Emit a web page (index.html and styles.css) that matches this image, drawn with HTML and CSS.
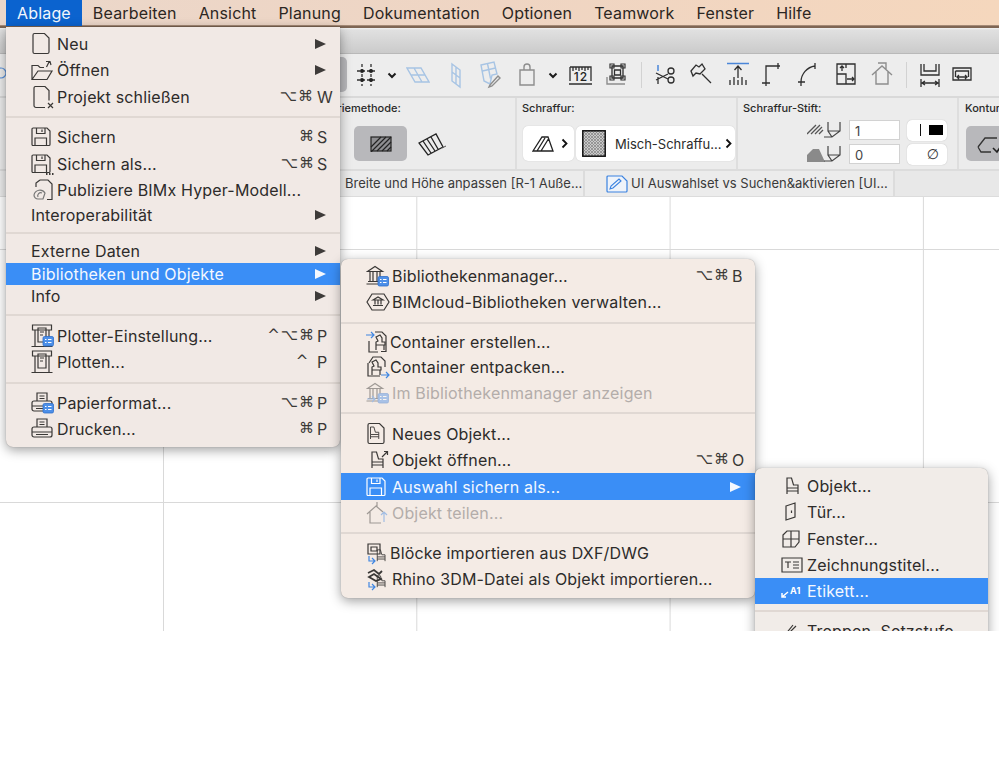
FILE: index.html
```html
<!DOCTYPE html>
<html lang="de">
<head>
<meta charset="utf-8">
<title>Ablage-Menü</title>
<link rel="stylesheet" href="styles.css">
</head>
<body>
<svg class="defs" width="0" height="0" aria-hidden="true">
  <defs>
    <pattern id="dots" width="3" height="3" patternUnits="userSpaceOnUse"><rect width="3" height="3" fill="#c9c9c9"/><circle cx="1" cy="1" r=".8" fill="#555"/><circle cx="2.500" cy="2.500" r=".5" fill="#777"/></pattern>
  </defs>
  <symbol id="floppy" viewBox="0 0 24 24"><path d="M1.500 3h14.500l3 3v13.500a1 1 0 0 1-1 1h-16a1 1 0 0 1-1-1v-15.500a1 1 0 0 1 1-1zM5.500 3v5.500h8.500v-5.500M11 4.500v2.500M4 20.500v-7.500h11.500v7.500"/></symbol>
  <symbol id="chair" viewBox="0 0 24 24"><path d="M6 4h4.500l2 7h4.500v3h-11zM6 14v6M17 14v6M6 17h11"/></symbol>
  <symbol id="temple" viewBox="0 0 24 24"><path d="M1.500 7.500l7.500-5 7.500 5zM4 8v9M7 8v9M11 8v9M14 8v9M2 17.500h14M.5 20h14"/></symbol>
  <symbol id="badge" viewBox="0 0 24 24"><rect x="12" y="12.500" width="10.500" height="9.500" rx="1.500" fill="#4d8fe8" stroke="#2f6fca" stroke-width=".8"/><path d="M14 15.500h1.500M17 15.500h3.500M14 18.500h1.500M17 18.500h3.500" stroke="#fff" stroke-width="1.200"/></symbol>
  <symbol id="printer" viewBox="0 0 24 24"><path d="M6 10v-8h10v8M8.500 5h5M8.500 7.500h5M3 10h16a2 2 0 0 1 2 2v6a2 2 0 0 1-2 2h-16a2 2 0 0 1-2-2v-6a2 2 0 0 1 2-2zM1 15h20M5 17.500h12"/></symbol>
  <symbol id="plotter" viewBox="0 0 24 24"><path d="M1.500 1h19v5h-19zM4 6v16M18 6v16M.5 22.500h21M7 4h8v14h-8zM9 8h4M9 11h3"/></symbol>
  <symbol id="page" viewBox="0 0 24 24"><path d="M3.500 1.500h10l4.500 4.500v14a1.500 1.500 0 0 1-1.500 1.500h-13a1.500 1.500 0 0 1-1.500-1.500v-17a1.500 1.500 0 0 1 1.500-1.500z"/></symbol>
</svg>

<div class="app">
  <nav class="menubar">
    <span class="mb-item on">Ablage</span>
    <span class="mb-item">Bearbeiten</span>
    <span class="mb-item">Ansicht</span>
    <span class="mb-item">Planung</span>
    <span class="mb-item">Dokumentation</span>
    <span class="mb-item">Optionen</span>
    <span class="mb-item">Teamwork</span>
    <span class="mb-item">Fenster</span>
    <span class="mb-item">Hilfe</span>
  </nav>
  <div class="titlebar"></div>

  <div class="toolbar">
    <svg class="edge-circle" width="8" height="24" viewBox="0 0 8 24"><circle cx="1" cy="12" r="5" fill="none" stroke="#5b93dc" stroke-width="1.200"/></svg>
    <div class="tb-active"></div>
    <div class="tb-icons">
      <svg class="ti" width="24" height="36" viewBox="0 0 24 36"><path class="s dash" d="M9 7v22M18 7v22M4 14h19M4 23h19"/><circle class="k" cx="9" cy="14" r="2"/><circle class="k" cx="18" cy="14" r="2"/><circle class="k" cx="9" cy="23" r="2"/><circle class="k" cx="18" cy="23" r="2"/></svg>
      <svg class="ti d27" width="24" height="36" viewBox="0 0 24 36"><path class="chev" d="M8.500 16.500l3.500 3.500 3.500-3.500"/></svg>
      <svg class="ti d26" width="24" height="36" viewBox="0 0 24 36"><path class="b" d="M1 11h14l8 14h-14zM8 11l8 14M5 18h14"/></svg>
      <svg class="ti d38" width="24" height="36" viewBox="0 0 24 36"><path class="b" d="M8 7l8 6v17l-8-6zM12 10v17M8 15l8 6"/></svg>
      <svg class="ti d34" width="24" height="36" viewBox="0 0 24 36"><path class="b" d="M3 8l13-3 3 12-5 1-2 9-6-3zM9.500 6.500l3 15M4.500 14l13-3"/><path class="g" d="M12 28l8-9 2 2-8 8-3 1z"/></svg>
      <svg class="ti d37" width="24" height="36" viewBox="0 0 24 36"><path class="g" d="M9 13v-3a3 3 0 0 1 6 0v3M5 13h14v15h-14z"/></svg>
      <svg class="ti d26" width="24" height="36" viewBox="0 0 24 36"><path class="chev" d="M8.500 16.500l3.500 3.500 3.500-3.500"/></svg>
      <svg class="ti d28" width="24" height="36" viewBox="0 0 24 36"><path class="s" d="M1 10h21v14M1 10v14M4 10v4M7 10v3M10 10v4M13 10v3M16 10v4M19 10v3M0 27h23" /><text class="rule-t" x="12" y="24" text-anchor="middle">12</text></svg>
      <svg class="ti d36" width="24" height="36" viewBox="0 0 24 36"><path class="s" d="M7 9h11v12h-11zM9.500 13h6v5h-6z"/><path class="g" d="M2 20v7h6M8 27h12"/><path class="k2" d="M5 7h4v4h-4zM16 7h4v4h-4zM5 19h4v4h-4zM16 19h4v4h-4z"/></svg>
      <div class="tb-div d24"></div>
      <svg class="ti d24" width="24" height="36" viewBox="0 0 24 36"><path class="bl" d="M5 8v6"/><path class="s" d="M5 20v7M3 16l12 6M3 23l12-6"/><circle class="s" cx="18" cy="14" r="3"/><circle class="s" cx="18" cy="23" r="3"/></svg>
      <svg class="ti d36" width="24" height="36" viewBox="0 0 24 36"><path class="s" d="M2 14l5-6 3 2 3-3 3 5-5 5-4-1-3 3zM13 17l9 9"/></svg>
      <svg class="ti d37" width="24" height="36" viewBox="0 0 24 36"><path class="bl" d="M1 6.500h22"/><path class="s" d="M12 21v-12M8.500 13l3.500-4 3.500 4M4 28v-5M8 28v-8M12 28v-5M16 28v-8M20 28v-5"/></svg>
      <svg class="ti d33" width="24" height="36" viewBox="0 0 24 36"><path class="s" d="M7 29v-20h14M3 26h8M19 6v6"/></svg>
      <svg class="ti d37" width="24" height="36" viewBox="0 0 24 36"><path class="s" d="M5 29v-4c0-8 6-15 14-16M2 25h7M19 6v6"/></svg>
      <svg class="ti d37" width="24" height="36" viewBox="0 0 24 36"><path class="s" d="M4 7h18v20h-18zM4 17h9v10M13 7v4"/><path class="s" d="M9 14v-5M7 11l2-2 2 2M14 22h7M19 20l2 2-2 2"/></svg>
      <svg class="ti d37" width="24" height="36" viewBox="0 0 24 36"><path class="g" d="M2 18l10-9 10 9M6 15v12h12v-12M8 6h8v6"/></svg>
      <div class="tb-div d24"></div>
      <svg class="ti d24" width="24" height="36" viewBox="0 0 24 36"><path class="s" d="M3 7v11h18v-11M6 7v7h12v-7M3 22v8M21 22v8M4 26h16M7 24l-3 2 3 2M17 24l3 2-3 2"/></svg>
      <svg class="ti d32" width="24" height="36" viewBox="0 0 24 36"><path class="s" d="M3 11h18v12h-18zM5.500 14h13v6M5.500 14v6M7 20h10M9 18l-2 2 2 2M15 18l2 2-2 2"/></svg>
      <div class="tb-div d24 last"></div>
    </div>
  </div>

  <div class="infobox">
    <section class="sec sec-geo">
      <h4 class="lbl">Geometriemethode:</h4>
      <div class="geo-btns">
        <div class="geo-on">
          <svg width="22" height="16" viewBox="0 0 22 16"><rect x="1" y="1" width="20" height="14" fill="#8f8f92" stroke="#222" stroke-width="1.200"/><path d="M1 11l10-10M1 16l15-15M7 15l14-14M12 15l9-9M17 15l4-4" stroke="#222" stroke-width="1.200"/></svg>
        </div>
        <svg class="geo-off" width="30" height="24" viewBox="0 0 30 24"><path d="M2 11l17-9 7 13-15 8zM6 9l8 12M10 7l8 12M14 5l7 12" fill="none" stroke="#222" stroke-width="1.300"/><path d="M25 16l4-2" stroke="#555"/></svg>
      </div>
    </section>
    <section class="sec sec-hatch">
      <h4 class="lbl">Schraffur:</h4>
      <div class="hatch-btns">
        <div class="wbtn w1">
          <svg width="22" height="16" viewBox="0 0 22 16"><path d="M1 15l9-14h6l5 14zM5 15l8-13M9 15l8-13M1.500 15h19" fill="none" stroke="#222" stroke-width="1.300"/></svg>
          <svg class="chv" width="7" height="11" viewBox="0 0 7 11"><path d="M1.500 1.500l4 4-4 4" fill="none" stroke="#111" stroke-width="1.800"/></svg>
        </div>
        <div class="wbtn w2">
          <svg class="swatch" width="24" height="27" viewBox="0 0 24 27"><rect x=".8" y=".8" width="22.400" height="25.400" fill="url(#dots)" stroke="#111" stroke-width="1.500"/></svg>
          <span class="w2-t">Misch-Schraffu...</span>
          <svg class="chv" width="7" height="11" viewBox="0 0 7 11"><path d="M1.500 1.500l4 4-4 4" fill="none" stroke="#111" stroke-width="1.800"/></svg>
        </div>
      </div>
    </section>
    <section class="sec sec-pen">
      <h4 class="lbl">Schraffur-Stift:</h4>
      <div class="pen-row">
        <svg width="34" height="22" viewBox="0 0 34 22"><path d="M0 15l9-9M4 15l9-9M8 15l7-7M12 15l4-4" stroke="#555" stroke-width="1.300" fill="none"/><path d="M21 3v9l4 6M33 3v9l-8 6h-8M21 12h12" fill="none" stroke="#444" stroke-width="1.200"/></svg>
        <span class="field">1</span>
        <span class="pill"><i class="bar"></i><i class="blk"></i></span>
      </div>
      <div class="pen-row">
        <svg width="34" height="22" viewBox="0 0 34 22"><path d="M0 19v-7l6-6h6l6 13z" fill="#8a8a8a"/><path d="M21 3v9l4 6M33 3v9l-8 6h-8M21 12h12" fill="none" stroke="#444" stroke-width="1.200"/></svg>
        <span class="field">0</span>
        <span class="pill slash">∅</span>
      </div>
    </section>
    <section class="sec sec-cont">
      <h4 class="lbl">Kontur:</h4>
      <div class="cont-btn">
        <svg width="28" height="22" viewBox="0 0 28 22"><path d="M2 14l7-9h12M2 14l3 5h10" fill="none" stroke="#333" stroke-width="1.300"/><path d="M17 15l4 4 6-9" fill="none" stroke="#222" stroke-width="1.600"/></svg>
      </div>
    </section>
  </div>

  <div class="tabs">
    <div class="tab t1">Breite und Höhe anpassen [R-1 Auße...</div>
    <div class="tab t2">
      <svg width="22" height="18" viewBox="0 0 22 18"><path d="M2 1h14l5 5v10a1 1 0 0 1-1 1h-18a1 1 0 0 1-1-1v-14a1 1 0 0 1 1-1z" fill="#eef3fa" stroke="#3a82e0" stroke-width="1.200"/><path d="M4 14l1-3 8-7 2 2-8 7z" fill="none" stroke="#3a82e0" stroke-width="1.100"/></svg>
      <span>UI Auswahlset vs Suchen&amp;aktivieren [UI...</span>
    </div>
  </div>

  <main class="canvas"></main>

  <!-- Menu: Ablage -->
  <div class="menu m1">
    <div class="row"><svg class="ic"><use href="#page"/></svg><span>Neu</span><i class="arr"></i></div>
    <div class="row"><svg class="ic" viewBox="0 0 24 24"><path d="M1 21.500v-14h6l2 2h4M1 21.500h15l5-8.500h-14l-6 8.500zM15.500 9l3-6M15 3.500h4l1 3.500"/></svg><span>Öffnen</span><i class="arr"></i></div>
    <div class="row"><svg class="ic" viewBox="0 0 24 24"><path d="M4 1.500h10l4 4v10M14 22.500h-9a2 2 0 0 1-2-2v-17a2 2 0 0 1 1-2M17 18l5 5M22 18l-5 5"/></svg><span>Projekt schließen</span><span class="keys">⌥⌘<b class="wide">W</b></span></div>
    <div class="sep"></div>
    <div class="row"><svg class="ic"><use href="#floppy"/></svg><span>Sichern</span><span class="keys">⌘<b>S</b></span></div>
    <div class="row"><svg class="ic"><use href="#floppy"/><path d="M15 22h1.500M18 22h1.500M21 22h1.500" stroke-width="1.800"/></svg><span>Sichern als...</span><span class="keys">⌥⌘<b>S</b></span></div>
    <div class="row"><svg class="ic" viewBox="0 0 24 24"><path d="M9 2h8l4 4v15.500h-5M5 9V5l4-3"/><path d="M3 17a6 6 0 0 1 11-2l-2 6H7a4 4 0 0 1-4-4zM7 19a3 3 0 0 1 4-4" stroke="#777"/></svg><span>Publiziere BIMx Hyper-Modell...</span></div>
    <div class="row t"><span>Interoperabilität</span><i class="arr"></i></div>
    <div class="sep"></div>
    <div class="row t"><span>Externe Daten</span><i class="arr"></i></div>
    <div class="row t hl"><span>Bibliotheken und Objekte</span><i class="arr"></i></div>
    <div class="row t"><span>Info</span><i class="arr"></i></div>
    <div class="sep wide-sep"></div>
    <div class="row"><svg class="ic"><use href="#plotter"/><use href="#badge"/></svg><span>Plotter-Einstellung...</span><span class="keys">^⌥⌘<b>P</b></span></div>
    <div class="row"><svg class="ic"><use href="#plotter"/></svg><span>Plotten...</span><span class="keys">^ <b>P</b></span></div>
    <div class="sep"></div>
    <div class="row"><svg class="ic"><use href="#printer"/><use href="#badge"/></svg><span>Papierformat...</span><span class="keys">⌥⌘<b>P</b></span></div>
    <div class="row"><svg class="ic"><use href="#printer"/></svg><span>Drucken...</span><span class="keys">⌘<b>P</b></span></div>
  </div>

  <!-- Menu: Bibliotheken und Objekte -->
  <div class="menu m2">
    <div class="row"><svg class="ic"><use href="#temple"/><use href="#badge"/></svg><span>Bibliothekenmanager...</span><span class="keys">⌥⌘<b>B</b></span></div>
    <div class="row"><svg class="ic" viewBox="0 0 24 24"><path d="M1 12l5-8h12l5 8-5 8h-12z"/><path d="M7 10l5-3 5 3zM9 10.500v4M12 10.500v4M15 10.500v4M7 15.500h10"/></svg><span>BIMcloud-Bibliotheken verwalten...</span></div>
    <div class="sep"></div>
    <div class="row c tight"><svg class="ic" viewBox="0 0 24 24"><path class="blue" d="M0 5h8M5 2l3 3-3 3"/><path d="M9 2h7l4 4v15.500h-5M3 11v11h9"/><path d="M10 7l4-2 2 3v4h3v3h-9v-3l2-1zM10 15v5M18 15v5"/></svg><span>Container erstellen...</span></div>
    <div class="row c tight"><svg class="ic" viewBox="0 0 24 24"><path d="M3 8l4-6h8l4 4v6M2 8v13h12"/><path d="M6 7l4-2 2 3v4h3v3h-9v-3l2-1zM6 15v5M14 15v5"/><path class="blue" d="M15 20h8M20 17l3 3-3 3"/></svg><span>Container entpacken...</span></div>
    <div class="row c dim"><svg class="ic"><use href="#temple"/><use href="#badge"/><path class="blue" d="M1 18h8M6 15l3 3-3 3"/></svg><span>Im Bibliothekenmanager anzeigen</span></div>
    <div class="sep wide-sep"></div>
    <div class="row"><svg class="ic"><use href="#page"/><use href="#chair" x="0" y="2" width="18" height="18"/></svg><span>Neues Objekt...</span></div>
    <div class="row"><svg class="ic"><use href="#chair"/><path d="M16 9l5-5M18 3.500h3.500v3.500"/></svg><span>Objekt öffnen...</span><span class="keys">⌥⌘<b>O</b></span></div>
    <div class="row hl"><svg class="ic"><use href="#floppy"/></svg><span>Auswahl sichern als...</span><i class="arr"></i></div>
    <div class="row dim"><svg class="ic" viewBox="0 0 24 24"><path d="M1 13l9-8 7 6M4 11v11h11M11 1v5"/><path class="blue" d="M18 21v-10M15 14l3-3 3 3"/></svg><span>Objekt teilen...</span></div>
    <div class="sep thin-sep"></div>
    <div class="row tight"><svg class="ic" viewBox="0 0 24 24"><path d="M2 3h12v10H2zM5 6h6v4H5z"/><use href="#chair" x="7" y="6" width="17" height="17"/><path class="blue" d="M3 15v5h6M6 17l3 3-3 3"/></svg><span>Blöcke importieren aus DXF/DWG</span></div>
    <div class="row"><svg class="ic" viewBox="0 0 24 24"><path d="M2 6l6-3 5 4 3-3M3 10l5-3 7 5-5 2z" stroke-width="1.800"/><use href="#chair" x="7" y="6" width="17" height="17"/><path class="blue" d="M3 15v5h6M6 17l3 3-3 3"/></svg><span>Rhino 3DM-Datei als Objekt importieren...</span></div>
  </div>

  <!-- Menu: Auswahl sichern als -->
  <div class="menu m3">
    <div class="row"><svg class="ic"><use href="#chair"/></svg><span>Objekt...</span></div>
    <div class="row"><svg class="ic" viewBox="0 0 24 24"><path d="M5 6l9-3v14l-9 3zM10.500 10.500v2.500"/></svg><span>Tür...</span></div>
    <div class="row"><svg class="ic" viewBox="0 0 24 24"><path d="M2 8l4-4h12v11l-4 5H2zM2 12h16M10 4v16"/></svg><span>Fenster...</span></div>
    <div class="row"><svg class="ic" viewBox="0 0 24 24"><path d="M1 5h20v14H1zM4 9h6M7 9v6M12 9h6M12 12h6M12 15h6"/></svg><span>Zeichnungstitel...</span></div>
    <div class="row hl"><svg class="ic" viewBox="0 0 24 24"><path d="M1 18l6-5M1 14v4h4" stroke-width="1.500"/><text class="a1" x="9" y="15">A1</text></svg><span>Etikett...</span></div>
    <div class="sep"></div>
    <div class="row"><svg class="ic" viewBox="0 0 24 24"><path d="M4 16l8-10M2 20l4-4 9-9M9 20l6-6M17 19h2"/></svg><span>Treppen, Setzstufe</span></div>
  </div>
</div>
</body>
</html>
```

FILE: styles.css
```css
* { box-sizing: border-box; }
html, body { margin: 0; padding: 0; background: #fff; }
body { font-family: Inter, "Noto Sans", "Liberation Sans", sans-serif; color: #2b2b2b; }
.defs { position: absolute; }

.app {
  position: relative;
  width: 999px;
  height: 631px;
  overflow: hidden;
  display: flex;
  flex-direction: column;
  background: #fff;
}

/* menu bar */
.menubar {
  flex: none;
  height: 28px;
  display: flex;
  padding-left: 6px;
  background: linear-gradient(90deg, #ebd7ca, #efd5c3 50%, #f5d7bd);
  border-bottom: 2px solid #7f6654;
  box-shadow: inset 0 -1px 0 #a58a76;
  font-size: 16px;
  line-height: 26px;
  letter-spacing: .17px;
}
.mb-item { padding: 0 11px; height: 26px; color: #2c2622; }
.mb-item.on { background: #0b63cf; color: #f2f6fc; }

/* window chrome */
.titlebar {
  flex: none;
  height: 26px;
  background: linear-gradient(#f2f2f2 0, #e0e0e0 8%, #cbcbcb 100%);
  border-bottom: 1px solid #b9b9b9;
}
.toolbar {
  flex: none;
  position: relative;
  height: 44px;
  background: #ededed;
  border-bottom: 2px solid #d9d9d9;
  display: flex;
  align-items: center;
  padding-left: 353px;
}
.edge-circle { position: absolute; left: 0; top: 7px; }
.tb-active { position: absolute; left: 320px; top: 3px; width: 27px; height: 35px; border-radius: 5px; background: #b8b8bb; }
.tb-icons { display: flex; align-items: center; }
.ti { flex: none; display: block; }
.ti path { fill: none; }
.ti circle.s { fill: none; }
.s { stroke: #2f2f2f; stroke-width: 1.300; }
.dash { stroke-dasharray: 3 2; }
.k { fill: #222; stroke: none; }
.k2 { stroke: #333; stroke-width: 1.200; }
.g { stroke: #8d8d8d; stroke-width: 1.400; }
.b { stroke: #a7c4e4; stroke-width: 1.400; }
.bl { stroke: #4a86d8; stroke-width: 1.500; }
.chev { stroke: #1c1c1c; stroke-width: 2; }
.rule-t { font-size: 12px; font-weight: 500; fill: #222; letter-spacing: 1px; }
.tb-div { flex: none; width: 1px; height: 26px; background: #d2d2d2; }
.d24 { margin-left: 0; }
.d26 { margin-left: 2px; }
.d27 { margin-left: 3px; }
.d28 { margin-left: 4px; }
.d32 { margin-left: 8px; }
.d33 { margin-left: 9px; }
.d34 { margin-left: 10px; }
.d36 { margin-left: 12px; }
.d37 { margin-left: 13px; }
.d38 { margin-left: 14px; }
.tb-div.d24 { margin-left: 12px; margin-right: 11px; }
.tb-div.last { margin-left: 41px; }

/* info box */
.infobox {
  flex: none;
  height: 73px;
  display: flex;
  background: #ececec;
  border-bottom: 2px solid #dcdcdc;
  overflow: hidden;
}
.sec { flex: none; border-right: 2px solid #dedede; padding-top: 3px; }
.lbl { margin: 0 0 10px; height: 15px; font-size: 11px; line-height: 15px; font-weight: 500; color: #2a2a2a; white-space: nowrap; }
.sec-geo { width: 517px; padding-left: 296px; }
.geo-btns { display: flex; align-items: center; }
.geo-on {
  width: 53px; height: 35px; margin-left: 58px;
  display: flex; align-items: center; justify-content: center;
  background: #b8b8bb; border-radius: 5px;
}
.geo-off { margin-left: 10px; }
.sec-hatch { width: 221px; padding-left: 5px; }
.hatch-btns { display: flex; gap: 2px; }
.wbtn { height: 35px; background: #fff; border-radius: 5px; display: flex; align-items: center; box-shadow: 0 0 1px #bbb; }
.w1 { width: 51px; padding-left: 9px; gap: 7px; margin-left: 1px; }
.w2 { width: 159px; padding-left: 6px; }
.w2-t { font-size: 13px; margin-left: 9px; width: 110px; white-space: nowrap; }
.swatch { flex: none; }
.chv { flex: none; }
.sec-pen { width: 221px; padding-left: 5px; }
.sec-pen .lbl { margin-bottom: 2px; }
.pen-row { display: flex; align-items: center; height: 24px; padding-left: 64px; }
.field {
  width: 51px; height: 20px; margin-left: 8px;
  background: #fff; border: 1px solid #d2d2d2;
  font-size: 13px; line-height: 20px; padding-left: 5px; color: #444;
}
.pill {
  width: 40px; height: 21px; margin-left: 7px;
  background: #fff; border-radius: 5px; box-shadow: 0 0 1px #aaa;
  display: flex; align-items: center; justify-content: flex-end; padding-right: 4px;
}
.bar { width: 1px; height: 12px; background: #111; margin-right: 8px; }
.blk { width: 14px; height: 10px; background: #000; }
.slash { font-size: 14px; padding-right: 8px; font-family: "DejaVu Sans", sans-serif; color: #333; }
.sec-cont { flex: 1; border: 0; padding-left: 6px; }
.cont-btn {
  width: 48px; height: 35px; background: #b8b8bb; border-radius: 5px 0 0 5px;
  display: flex; align-items: center; padding-left: 10px; margin-left: 1px;
}

/* tabs */
.tabs {
  flex: none;
  height: 26px;
  display: flex;
  background: #e8e8e8;
  border-bottom: 1px solid #dcdcdc;
  font-size: 13px;
  line-height: 25px;
  color: #3a3a3a;
}
.tab { flex: none; height: 25px; background: #ececec; white-space: nowrap; border-right: 2px solid #dcdcdc; }
.t1 { width: 585px; padding-left: 345px; overflow: hidden; }
.t2 { width: 310px; display: flex; align-items: center; padding-left: 21px; gap: 3px; }

/* canvas */
.canvas {
  flex: 1;
  background-color: #fff;
  background-image:
    linear-gradient(90deg, #d9d9d9 1px, transparent 1px),
    linear-gradient(#d9d9d9 1px, transparent 1px);
  background-size: 253.300px 253px, 253.300px 253px;
  background-position: 163px 0, 0 52px;
}

/* menus */
.menu {
  position: absolute;
  background: #f1e9e5;
  border-radius: 0 0 7px 7px;
  box-shadow: 0 3px 12px rgba(0, 0, 0, .38), 0 0 1px rgba(0, 0, 0, .35);
  font-size: 16px;
  letter-spacing: .17px;
  color: #2d2b2a;
}
.m1 { left: 6px; top: 27px; width: 334px; padding: 3.500px 0 4px; }
.m2 { left: 341px; top: 259px; width: 414px; padding: 3.500px 0 5.500px; border-radius: 7px; background: #f4ebe5; }
.m3 { left: 755px; top: 468px; width: 233px; padding: 5px 0 0; border-radius: 7px; background: #f1ece8; }
.row {
  display: flex;
  align-items: center;
  height: 26.500px;
  padding: 0 12px 0 25px;
  white-space: nowrap;
}
.m3 .row { height: 26.250px; padding-left: 26px; }
.row.t { height: 22.500px; }
.row.c { height: 25.250px; }
.row.tight span:not(.keys) { margin-left: -2px; }
.row.hl { background: #3a8ef6; color: #f4f8fe; }
.row.dim { color: #b3adaa; }
.row.dim .ic { opacity: .45; }
.ic {
  flex: none;
  width: 24px;
  height: 24px;
  margin-right: 2px;
  fill: none;
  stroke: currentColor;
  stroke-width: 1.200;
  color: #3a3836;
}
.hl .ic { color: #fff; }
.ic .blue { stroke: #3f86e2; }
.a1 { font-size: 9px; font-weight: 700; fill: currentColor; stroke: none; }
.keys { margin-left: auto; display: flex; font-family: "DejaVu Sans", Inter, sans-serif; font-size: 15px; letter-spacing: 1px; color: #3a3836; white-space: pre; }
.keys b { font-family: Inter, sans-serif; font-weight: 400; font-size: 16px; width: 11px; margin-left: 2px; letter-spacing: 0; }
.keys b.wide { width: 16px; margin-left: 3px; margin-right: -5px; }
.arr {
  margin-left: auto;
  margin-right: 2px;
  width: 0; height: 0;
  border-style: solid;
  border-width: 5.500px 0 5.500px 11px;
  border-color: transparent transparent transparent #3e3b39;
}
.hl .arr { border-left-color: #f4f8fe; }
.sep { height: 14px; display: flex; align-items: center; }
.sep.wide-sep { height: 15px; }
.sep.thin-sep { height: 13px; }
.sep::after { content: ""; display: block; width: 100%; height: 2px; background: #e0d8d3; }
```
